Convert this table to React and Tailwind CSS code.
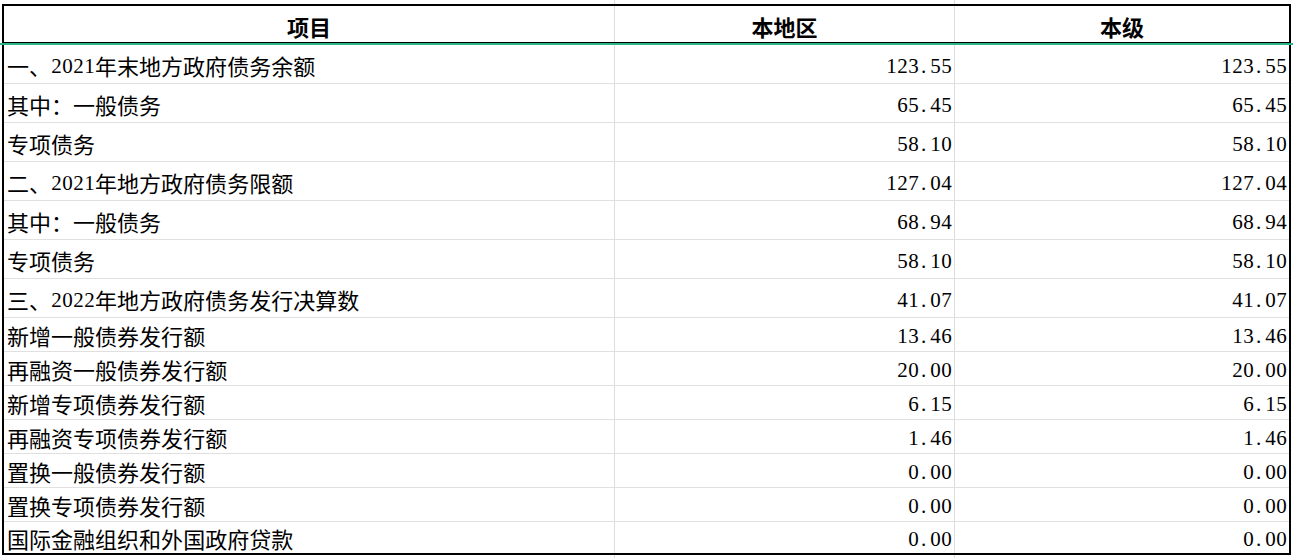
const rows = [
  { name: '一、2021年末地方政府债务余额', a: '123.55', b: '123.55', tall: true },
  { name: '其中：一般债务', a: '65.45', b: '65.45', tall: true },
  { name: '专项债务', a: '58.10', b: '58.10', tall: true },
  { name: '二、2021年地方政府债务限额', a: '127.04', b: '127.04', tall: true },
  { name: '其中：一般债务', a: '68.94', b: '68.94', tall: true },
  { name: '专项债务', a: '58.10', b: '58.10', tall: true },
  { name: '三、2022年地方政府债务发行决算数', a: '41.07', b: '41.07', tall: true },
  { name: '新增一般债券发行额', a: '13.46', b: '13.46' },
  { name: '再融资一般债券发行额', a: '20.00', b: '20.00' },
  { name: '新增专项债券发行额', a: '6.15', b: '6.15' },
  { name: '再融资专项债券发行额', a: '1.46', b: '1.46' },
  { name: '置换一般债券发行额', a: '0.00', b: '0.00' },
  { name: '置换专项债券发行额', a: '0.00', b: '0.00' },
  { name: '国际金融组织和外国政府贷款', a: '0.00', b: '0.00', last: true },
];

const cjk = "font-['Noto_Sans_CJK_SC',sans-serif]";

// half-width chars sit in 11px cells like the spreadsheet's SimSun
function Mixed({ text }) {
  return (
    <span className="inline-flex items-center">
      {text.split('').map((ch, i) =>
        /[0-9.]/.test(ch) ? (
          <span
            key={i}
            className={`inline-block w-[11px] font-['Liberation_Serif',serif] text-[21px] leading-none ${ch === '.' ? 'pl-[2px] text-left' : 'text-center'}`}
          >
            {ch}
          </span>
        ) : (
          <span key={i} className={`${cjk} mb-[3px] text-[22px] leading-none`}>
            {ch}
          </span>
        )
      )}
    </span>
  );
}

function Gridlines({ h }) {
  return (
    <div className={`flex ${h}`}>
      <div className="w-[614px]" />
      <div className="w-px bg-[#dcdcdc]" />
      <div className="w-[339px]" />
      <div className="w-px bg-[#dcdcdc]" />
    </div>
  );
}

export default function App() {
  return (
    <div className="h-[558px] w-[1293px] overflow-hidden bg-white text-black">
      <div className="flex h-[4px] overflow-hidden">
        <div className="w-[614px]" />
        <div className="w-px bg-[#dcdcdc]" />
        <div className="w-[339px]" />
        <div className="w-px bg-[#dcdcdc]" />
        <div className="flex flex-1 justify-end pr-[22px]">
          <span className={`${cjk} mt-[-24px] text-[22px] leading-[22px] text-gray-400`}>单位：亿元</span>
        </div>
      </div>

      <div className="ml-[2px] w-[1289px] border-x-2 border-t-2 border-b border-black">
        <div className="flex h-[36px] font-bold">
          <div className="flex w-[611px] items-center justify-center border-r border-[#dcdcdc] pt-[3px]">
            <span className={`${cjk} text-[22px] leading-none`}>项目</span>
          </div>
          <div className="flex w-[340px] items-center justify-center border-r border-[#dcdcdc] pt-[3px]">
            <span className={`${cjk} text-[22px] leading-none`}>本地区</span>
          </div>
          <div className="flex w-[334px] items-center justify-center pt-[3px]">
            <span className={`${cjk} text-[22px] leading-none`}>本级</span>
          </div>
        </div>
      </div>
      <div className="h-[2px] w-[1293px] bg-[#2bb585]" />

      <div className="ml-[2px] w-[1289px] border-x-2 border-b-2 border-black">
        {rows.map((r, i) => (
          <div
            key={i}
            className={`flex ${r.tall ? 'h-[39px]' : r.last ? 'h-[31px]' : 'h-[34px]'} ${r.last ? '' : 'border-b border-[#e0e0e0]'}`}
          >
            <div className="flex w-[611px] items-center border-r border-[#dcdcdc] pl-[3px] pt-[4px]">
              <Mixed text={r.name} />
            </div>
            <div className="flex w-[340px] items-center justify-end border-r border-[#dcdcdc] pr-[2px] pt-[4px]">
              <Mixed text={r.a} />
            </div>
            <div className="flex w-[334px] items-center justify-end pr-[2px] pt-[4px]">
              <Mixed text={r.b} />
            </div>
          </div>
        ))}
      </div>
      <Gridlines h="h-[4px]" />
    </div>
  );
}
